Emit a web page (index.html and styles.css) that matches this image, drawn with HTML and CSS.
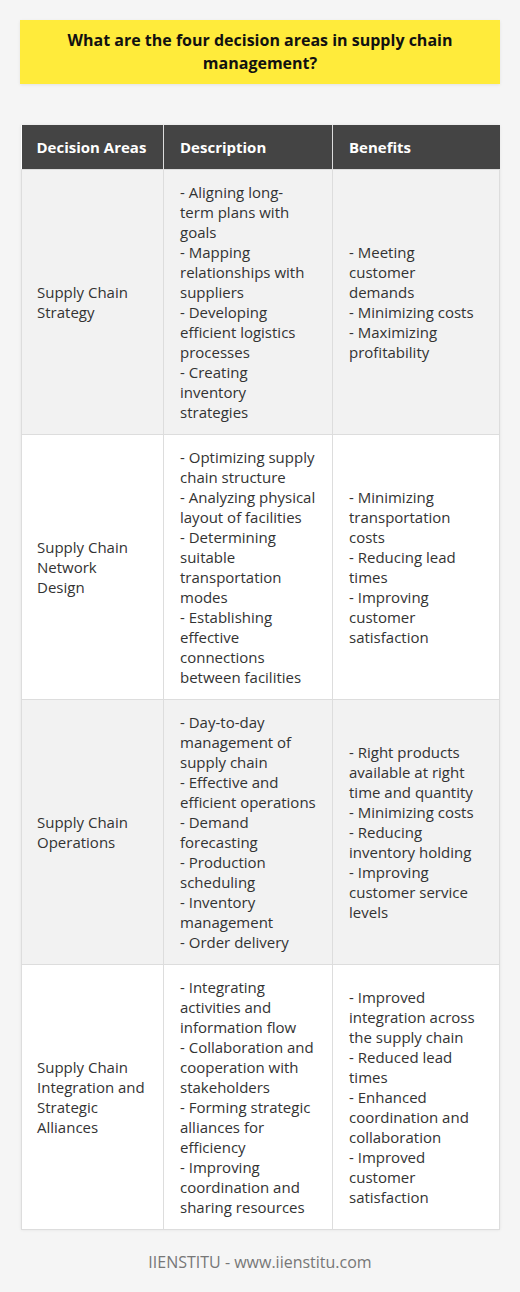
FILE: index.html
```html
<!DOCTYPE html>
<html>
<head>
<meta charset="utf-8">
<link rel="stylesheet" href="styles.css">
</head>
<body>
<div class="page">
  <div class="title-box">
    <h1 class="title">What are the four decision areas in supply chain management?</h1>
  </div>
  <table class="grid">
    <colgroup>
      <col class="c1">
      <col class="c2">
      <col class="c3">
    </colgroup>
    <thead>
      <tr>
        <th>Decision Areas</th>
        <th>Description</th>
        <th>Benefits</th>
      </tr>
    </thead>
    <tbody>
      <tr class="shade">
        <td>Supply Chain Strategy</td>
        <td>- Aligning long-term plans with goals<br>- Mapping relationships with suppliers<br>- Developing efficient logistics processes<br>- Creating inventory strategies</td>
        <td>- Meeting customer demands<br>- Minimizing costs<br>- Maximizing profitability</td>
      </tr>
      <tr>
        <td>Supply Chain Network Design</td>
        <td>- Optimizing supply chain structure<br>- Analyzing physical layout of facilities<br>- Determining suitable transportation modes<br>- Establishing effective connections between facilities</td>
        <td>- Minimizing transportation costs<br>- Reducing lead times<br>- Improving customer satisfaction</td>
      </tr>
      <tr class="shade">
        <td>Supply Chain Operations</td>
        <td>- Day-to-day management of supply chain<br>- Effective and efficient operations<br>- Demand forecasting<br>- Production scheduling<br>- Inventory management<br>- Order delivery</td>
        <td>- Right products available at right time and quantity<br>- Minimizing costs<br>- Reducing inventory holding<br>- Improving customer service levels</td>
      </tr>
      <tr>
        <td>Supply Chain Integration and Strategic Alliances</td>
        <td>- Integrating activities and information flow<br>- Collaboration and cooperation with stakeholders<br>- Forming strategic alliances for efficiency<br>- Improving coordination and sharing resources</td>
        <td>- Improved integration across the supply chain<br>- Reduced lead times<br>- Enhanced coordination and collaboration<br>- Improved customer satisfaction</td>
      </tr>
    </tbody>
  </table>
  <p class="footer">IIENSTITU - www.iienstitu.com</p>
</div>
</body>
</html>
```

FILE: styles.css
```css
html, body {
  margin: 0;
  padding: 0;
  background: #f5f5f5;
}
.page {
  padding: 20px 20px 0 20px;
  font-family: "Open Sans", "Liberation Sans", sans-serif;
  color: #333;
}
.title-box {
  background: #ffeb3b;
  padding: 9px 20px;
  box-shadow: 0 1px 3px rgba(0,0,0,0.08);
}
.title {
  margin: 0;
  text-align: center;
  font-size: 16px;
  line-height: 23px;
  font-weight: 700;
  color: #111;
}
.grid {
  margin: 41px 0 0 1px;
  width: 478px;
  border-collapse: collapse;
  table-layout: fixed;
  background: #fff;
  box-shadow: 0 0 3px rgba(0,0,0,0.08);
  font-size: 15px;
  line-height: 20px;
}
.c1 { width: 142px; }
.c2 { width: 169px; }
.c3 { width: 167px; }
th, td {
  box-sizing: border-box;
}
th {
  background: #444;
  color: #fff;
  font-weight: 700;
  text-align: left;
  padding: 12px 15px 12px 16px;
  border: 1px solid #ddd;
  border-top: none;
}
th:first-child { border-left: none; }
th:last-child { border-right: none; }
td {
  padding: 12px 15px 12px 16px;
  border: 1px solid #ddd;
  vertical-align: middle;
  color: #333;
}
th:first-child, td:first-child {
  padding-left: 15px;
}
th:nth-child(2), td:nth-child(2) {
  padding-right: 16px;
}
.shade td { background: #f2f2f2; }
.footer {
  margin: 21px 0 0 0;
  text-align: center;
  font-size: 16px;
  line-height: 22px;
  color: #777;
}
```
